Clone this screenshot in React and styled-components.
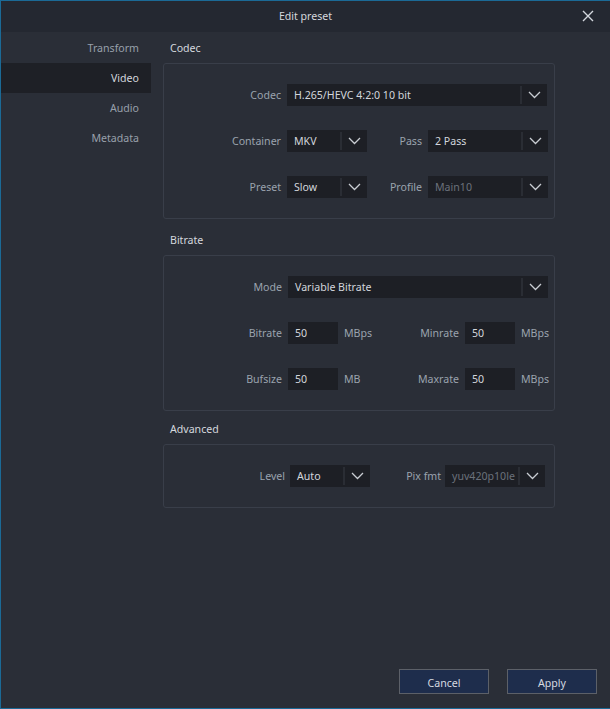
import React from 'react'
import styled, { createGlobalStyle } from 'styled-components'

const GlobalStyle = createGlobalStyle`
  html, body, #root {
    margin: 0;
    padding: 0;
    height: 100%;
  }
  body {
    background: #2a2e37;
    font-family: "Noto Sans", "Open Sans", sans-serif;
    font-size: 10.6px;
  }
`

const Window = styled.div`
  box-sizing: border-box;
  height: 709px;
  width: 610px;
  display: flex;
  flex-direction: column;
  background: #2a2e37;
  border-top: 1px solid #1b6a96;
  border-left: 1px solid #1b6a96;
  border-bottom: 1px solid #1b6a96;
`

const TitleBar = styled.div`
  position: relative;
  height: 31px;
  flex: none;
  display: flex;
  align-items: center;
  justify-content: center;
  padding-bottom: 2px;
  box-sizing: border-box;
  background: #242831;
  color: #d4d8de;
`

const CloseButton = styled.button`
  position: absolute;
  right: 15px;
  top: 8px;
  width: 14px;
  height: 14px;
  padding: 0;
  border: 0;
  background: none;
  display: flex;
  align-items: center;
  justify-content: center;
  cursor: pointer;
`

const Body = styled.div`
  flex: 1;
  display: flex;
  min-height: 0;
`

const Sidebar = styled.nav`
  width: 150px;
  flex: none;
  padding-top: 1px;
`

const NavItem = styled.div`
  height: 30px;
  display: flex;
  align-items: center;
  justify-content: flex-end;
  padding-right: 12px;
  color: ${p => (p.active ? '#d2d6dc' : '#98a0ab')};
  background: ${p => (p.active ? '#1e2026' : 'transparent')};
`

const Main = styled.div`
  flex: 1;
  display: flex;
  flex-direction: column;
  padding: 7px 0 0 12px;
`

const Section = styled.section`
  width: 392px;
  margin-top: ${p => p.space || 0}px;
`

const SectionTitle = styled.div`
  height: 18px;
  line-height: 18px;
  padding-left: 7px;
  margin-bottom: 6px;
  color: #d4d8de;
`

const Box = styled.div`
  box-sizing: border-box;
  border: 1px solid #393e49;
  border-radius: 3px;
  padding: 20px 0;
  display: flex;
  flex-direction: column;
  gap: 24px;
`

const Row = styled.div`
  display: flex;
  align-items: center;
  height: 22px;
  line-height: 20px;
`

const Label = styled.span`
  box-sizing: border-box;
  width: ${p => p.w}px;
  flex: none;
  text-align: right;
  padding-right: ${p => p.gap ?? 6}px;
  color: #9aa3ae;
  white-space: nowrap;
`

const Unit = styled.span`
  box-sizing: border-box;
  width: ${p => p.w}px;
  flex: none;
  padding-left: 6px;
  color: #9aa3ae;
`

const SelectBox = styled.div`
  width: ${p => p.w}px;
  height: 22px;
  flex: none;
  display: flex;
  align-items: center;
  background: #1d1f25;
  box-sizing: border-box;
`

const SelectValue = styled.span`
  flex: 1;
  padding-left: 7px;
  color: ${p => (p.disabled ? '#6b717b' : '#d2d6dc')};
  overflow: hidden;
  white-space: nowrap;
`

const ArrowPart = styled.span`
  width: 25px;
  height: 18px;
  flex: none;
  display: flex;
  align-items: center;
  justify-content: center;
  border-left: 2px solid #2a2d34;
`

const TextInput = styled.div`
  width: 50px;
  height: 22px;
  flex: none;
  box-sizing: border-box;
  display: flex;
  align-items: center;
  padding-left: 7px;
  background: #1d1f25;
  color: #d2d6dc;
`

const Footer = styled.div`
  margin-top: auto;
  display: flex;
  justify-content: flex-end;
  gap: 18px;
  padding: 0 13px 14px 0;
`

const Button = styled.button`
  width: 90px;
  height: 25px;
  box-sizing: border-box;
  border: 1px solid #5c6068;
  background: #1e2d4c;
  color: #d6dae0;
  font-family: inherit;
  font-size: inherit;
  padding: 2px 0 0;
`

const Chevron = () => (
  <svg width="13" height="8" viewBox="0 0 13 8">
    <path d="M1 1 L6.5 6.5 L12 1" fill="none" stroke="#c9cdd3" strokeWidth="1.3" />
  </svg>
)

const Select = ({ w, value, disabled }) => (
  <SelectBox w={w}>
    <SelectValue disabled={disabled}>{value}</SelectValue>
    <ArrowPart>
      <Chevron />
    </ArrowPart>
  </SelectBox>
)

const navItems = ['Transform', 'Video', 'Audio', 'Metadata']

export default function App() {
  return (
    <>
      <GlobalStyle />
      <Window>
        <TitleBar>
          Edit preset
          <CloseButton aria-label="Close">
            <svg width="12" height="12" viewBox="0 0 12 12">
              <path d="M1 1 L11 11 M11 1 L1 11" stroke="#d4d8de" strokeWidth="1.4" />
            </svg>
          </CloseButton>
        </TitleBar>
        <Body>
          <Sidebar>
            {navItems.map(item => (
              <NavItem key={item} active={item === 'Video'}>
                {item}
              </NavItem>
            ))}
          </Sidebar>
          <Main>
            <Section>
              <SectionTitle>Codec</SectionTitle>
              <Box>
                <Row>
                  <Label w={123}>Codec</Label>
                  <Select w={260} value="H.265/HEVC 4:2:0 10 bit" />
                </Row>
                <Row>
                  <Label w={123}>Container</Label>
                  <Select w={80} value="MKV" />
                  <Label w={61}>Pass</Label>
                  <Select w={120} value="2 Pass" />
                </Row>
                <Row>
                  <Label w={123}>Preset</Label>
                  <Select w={80} value="Slow" />
                  <Label w={61}>Profile</Label>
                  <Select w={120} value="Main10" disabled />
                </Row>
              </Box>
            </Section>
            <Section space={12}>
              <SectionTitle>Bitrate</SectionTitle>
              <Box>
                <Row>
                  <Label w={124}>Mode</Label>
                  <Select w={260} value="Variable Bitrate" />
                </Row>
                <Row>
                  <Label w={124}>Bitrate</Label>
                  <TextInput>50</TextInput>
                  <Unit w={62}>MBps</Unit>
                  <Label w={65}>Minrate</Label>
                  <TextInput>50</TextInput>
                  <Unit w={40}>MBps</Unit>
                </Row>
                <Row>
                  <Label w={124}>Bufsize</Label>
                  <TextInput>50</TextInput>
                  <Unit w={62}>MB</Unit>
                  <Label w={65}>Maxrate</Label>
                  <TextInput>50</TextInput>
                  <Unit w={40}>MBps</Unit>
                </Row>
              </Box>
            </Section>
            <Section space={9}>
              <SectionTitle>Advanced</SectionTitle>
              <Box>
                <Row>
                  <Label w={126} gap={5}>Level</Label>
                  <Select w={80} value="Auto" />
                  <Label w={75} gap={4}>Pix fmt</Label>
                  <Select w={100} value="yuv420p10le" disabled />
                </Row>
              </Box>
            </Section>
            <Footer>
              <Button>Cancel</Button>
              <Button>Apply</Button>
            </Footer>
          </Main>
        </Body>
      </Window>
    </>
  )
}
